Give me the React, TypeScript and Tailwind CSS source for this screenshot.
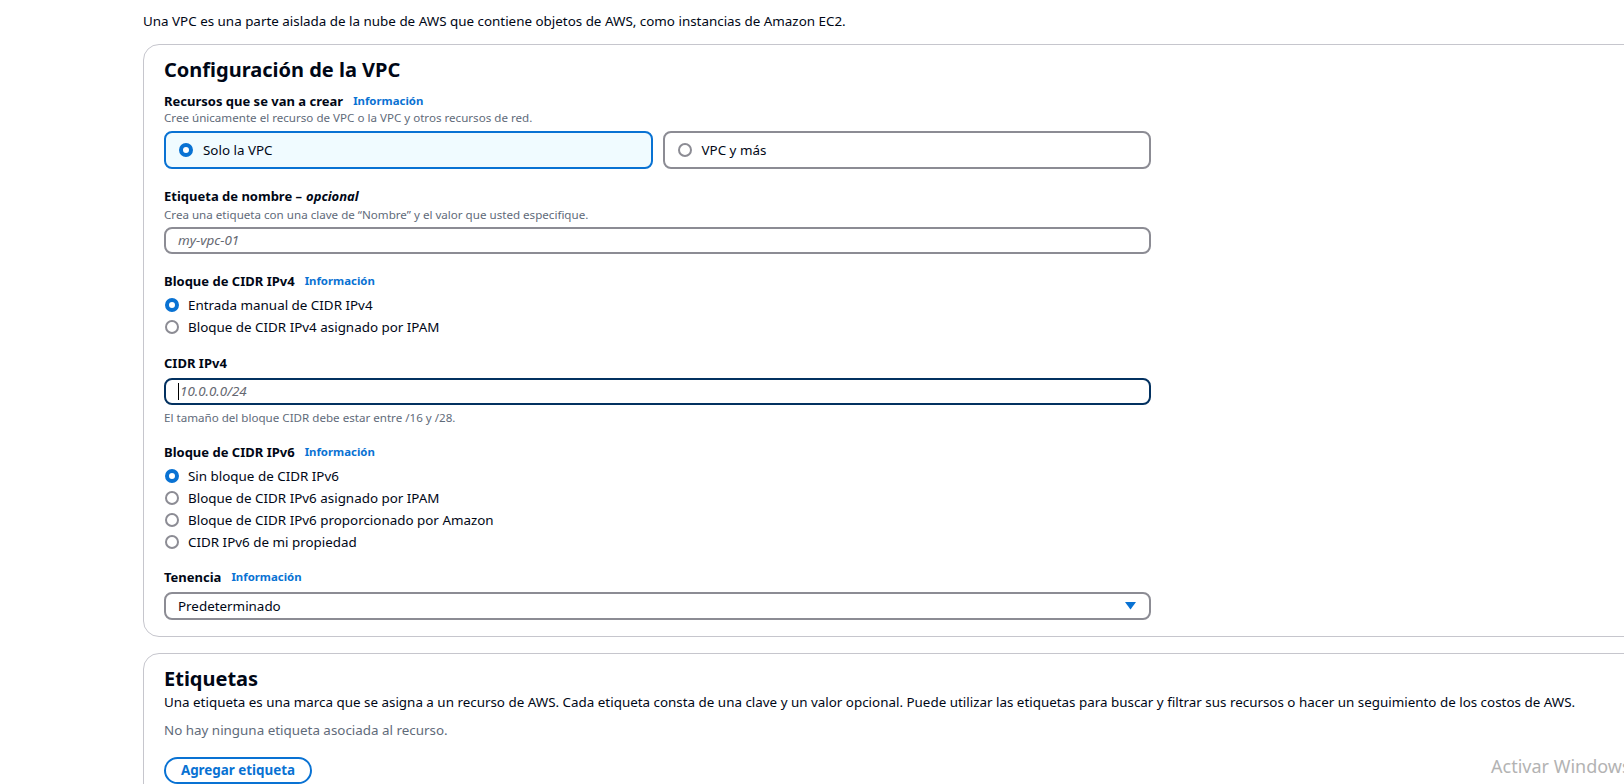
import React from 'react'

const font = { fontFamily: '"Noto Sans", "Open Sans", Arial, sans-serif' }

function Info() {
  return <span className="ml-[10px] text-[11.4px] font-bold text-[#0972d3]">Información</span>
}

function Radio({ checked }: { checked?: boolean }) {
  return checked ? (
    <span className="box-border inline-block h-[14px] w-[14px] shrink-0 rounded-full border-[4px] border-[#0972d3] bg-white" />
  ) : (
    <span className="box-border inline-block h-[14px] w-[14px] shrink-0 rounded-full border-2 border-[#8c8c94] bg-white" />
  )
}

function RadioRow({ label, checked }: { label: string; checked?: boolean }) {
  return (
    <div className="flex h-[22px] items-center gap-[9px] pl-px text-[13.4px] text-[#000716]">
      <Radio checked={checked} />
      <span>{label}</span>
    </div>
  )
}

function Label({ children }: { children: React.ReactNode }) {
  return <div className="flex items-center text-[13px] font-bold leading-[18px] text-[#000716]">{children}</div>
}

function Hint({ children }: { children: React.ReactNode }) {
  return <div className="text-[11.6px] leading-[16px] text-[#5f6b7a]">{children}</div>
}

export default function App() {
  return (
    <div className="relative h-[784px] w-[1624px] overflow-hidden bg-white" style={font}>
      <div className="pl-[143px] pt-[11px]">
        <p className="text-[13.4px] leading-[20px] text-[#000716]">
          Una VPC es una parte aislada de la nube de AWS que contiene objetos de AWS, como instancias de Amazon EC2.
        </p>

        {/* VPC settings */}
        <section className="mt-[13px] w-[1520px] rounded-[16px] border border-[#c6c6cd] pb-[16px] pl-[20px] pt-[13px]">
          <h2 className="text-[20px] font-bold leading-[24px] text-[#000716]">Configuración de la VPC</h2>
          <div className="w-[987px]">
            <div className="mt-[10px]">
              <Label>
                Recursos que se van a crear <Info />
              </Label>
              <Hint>Cree únicamente el recurso de VPC o la VPC y otros recursos de red.</Hint>
              <div className="mt-[5px] grid grid-cols-2 gap-[10px]">
                <div className="flex h-[38px] items-center gap-[10px] rounded-[8px] border-2 border-[#0972d3] bg-[#f0fbff] pl-[13px] text-[13.4px] text-[#000716]">
                  <Radio checked />
                  <span>Solo la VPC</span>
                </div>
                <div className="flex h-[38px] items-center gap-[10px] rounded-[8px] border-2 border-[#8c8c94] pl-[13px] text-[13.4px] text-[#000716]">
                  <Radio />
                  <span>VPC y más</span>
                </div>
              </div>
            </div>

            <div className="mt-[18px]">
              <Label>
                Etiqueta de nombre – <i className="ml-[4px]">opcional</i>
              </Label>
              <div className="mt-[2px]">
                <Hint>Crea una etiqueta con una clave de “Nombre” y el valor que usted especifique.</Hint>
              </div>
              <div className="mt-[4px] flex h-[27px] items-center rounded-[8px] border-2 border-[#8c8c94] pl-[12px] text-[13.4px] italic text-[#656871]">
                my-vpc-01
              </div>
            </div>

            <div className="mt-[18px]">
              <Label>
                Bloque de CIDR IPv4 <Info />
              </Label>
              <div className="mt-[4px]">
                <RadioRow checked label="Entrada manual de CIDR IPv4" />
                <RadioRow label="Bloque de CIDR IPv4 asignado por IPAM" />
              </div>
            </div>

            <div className="mt-[16px]">
              <Label>CIDR IPv4</Label>
              <div className="mt-[6px] flex h-[27px] items-center rounded-[8px] border-2 border-[#033160] pl-[12px] text-[13.4px] italic text-[#656871]">
                <span className="mr-px h-[17px] w-px bg-black" />
                10.0.0.0/24
              </div>
              <div className="mt-[5px]">
                <Hint>El tamaño del bloque CIDR debe estar entre /16 y /28.</Hint>
              </div>
            </div>

            <div className="mt-[17px]">
              <Label>
                Bloque de CIDR IPv6 <Info />
              </Label>
              <div className="mt-[4px]">
                <RadioRow checked label="Sin bloque de CIDR IPv6" />
                <RadioRow label="Bloque de CIDR IPv6 asignado por IPAM" />
                <RadioRow label="Bloque de CIDR IPv6 proporcionado por Amazon" />
                <RadioRow label="CIDR IPv6 de mi propiedad" />
              </div>
            </div>

            <div className="mt-[15px]">
              <Label>
                Tenencia <Info />
              </Label>
              <div className="mt-[6px] flex h-[28px] items-center justify-between rounded-[8px] border-2 border-[#8c8c94] pl-[12px] pr-[13px] text-[13.4px] text-[#000716]">
                <span>Predeterminado</span>
                <svg width="11" height="8" viewBox="0 0 11 8">
                  <path d="M0 0h11L5.5 7.5z" fill="#0972d3" />
                </svg>
              </div>
            </div>
          </div>
        </section>

        {/* Tags */}
        <section className="mt-[16px] h-[200px] w-[1520px] rounded-[16px] border border-[#c6c6cd] pl-[20px] pt-[13px]">
          <h2 className="text-[20px] font-bold leading-[24px] text-[#000716]">Etiquetas</h2>
          <p className="mt-px text-[13.4px] leading-[20px] text-[#000716]">
            Una etiqueta es una marca que se asigna a un recurso de AWS. Cada etiqueta consta de una clave y un valor opcional. Puede utilizar las etiquetas para buscar y filtrar sus recursos o hacer un seguimiento de los costos de AWS.
          </p>
          <p className="mt-[8px] text-[13.4px] leading-[20px] text-[#5f6b7a]">No hay ninguna etiqueta asociada al recurso.</p>
          <button className="mt-[17px] flex h-[27px] w-[148px] items-center justify-center rounded-full border-2 border-[#0972d3] text-[13.4px] font-bold text-[#0972d3]">
            Agregar etiqueta
          </button>
        </section>
      </div>

      <div className="absolute left-[1491px] top-[753px] whitespace-nowrap text-[18px] leading-[26px] text-[#b3b3b3]">
        Activar Windows
      </div>
    </div>
  )
}
